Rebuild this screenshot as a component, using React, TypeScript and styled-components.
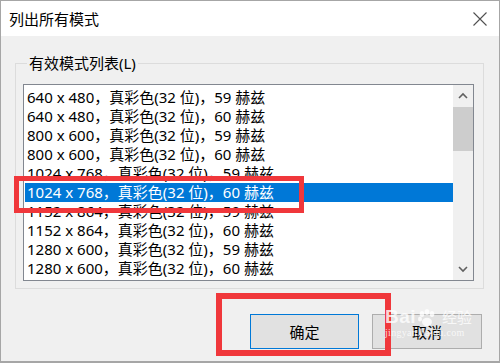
import React from "react";
import styled, { createGlobalStyle } from "styled-components";

const GlobalStyle = createGlobalStyle`
  html, body { margin: 0; padding: 0; background: #ffffff; }
  body { font-family: "Noto Sans", "Noto Sans CJK SC", sans-serif; }
`;

const FONT = `"Noto Sans", "Noto Sans CJK SC", sans-serif`;

const Window = styled.div`
  position: relative;
  width: 500px;
  height: 363px;
  box-sizing: border-box;
  border: 1px solid #a6a6a6;
  border-bottom-width: 2px;
  display: flex;
  flex-direction: column;
  background: #f0f0f0;
  overflow: hidden;
  font-family: ${FONT};
`;

const TitleBar = styled.div`
  height: 35px;
  flex: none;
  background: #ffffff;
  display: flex;
  align-items: center;
  justify-content: space-between;
  padding: 0 12px 0 8px;
`;

const Title = styled.span`
  font-size: 15px;
  color: #000;
  line-height: 20px;
`;

const CloseButton = styled.span`
  display: flex;
  width: 14px;
  height: 14px;
`;

const Body = styled.div`
  flex: 1;
  display: flex;
  flex-direction: column;
  padding: 17px 15px 0 14px;
`;

const GroupBox = styled.fieldset`
  margin: 0;
  padding: 11px 9px 7px 7px;
  border: 1px solid #dcdcdc;
  min-width: 0;
`;

const GroupTitle = styled.legend`
  font-size: 15px;
  line-height: 20px;
  color: #000;
  padding: 0 2px;
  margin-left: 4px;
`;

const ListBox = styled.div`
  height: 197px;
  box-sizing: border-box;
  border: 1px solid #828790;
  background: #ffffff;
  display: flex;
`;

const Items = styled.div`
  flex: 1;
  padding: 3px 0 0 1px;
  overflow: hidden;
`;

const Item = styled.div<{ $selected?: boolean }>`
  height: 19px;
  line-height: 19px;
  padding-left: 2px;
  font-size: 15px;
  white-space: nowrap;
  color: ${(p) => (p.$selected ? "#ffffff" : "#000000")};
  background: ${(p) => (p.$selected ? "#0078d7" : "transparent")};
`;

const ScrollBar = styled.div`
  width: 20px;
  flex: none;
  background: #f0f0f0;
  display: flex;
  flex-direction: column;
`;

const ArrowBox = styled.div`
  height: 21px;
  display: flex;
  align-items: center;
  justify-content: center;
`;

const Track = styled.div`
  flex: 1;
  display: flex;
  flex-direction: column;
  padding-top: 1px;
`;

const Thumb = styled.div`
  height: 44px;
  background: #cdcdcd;
`;

const ButtonRow = styled.div`
  display: flex;
  justify-content: flex-end;
  gap: 13px;
  margin-top: 25px;
  padding-right: 2px;
`;

const Button = styled.button<{ $default?: boolean }>`
  width: ${(p) => (p.$default ? "109px" : "110px")};
  height: 35px;
  box-sizing: border-box;
  border: 1px solid ${(p) => (p.$default ? "#0078d7" : "#adadad")};
  background: #e1e1e1;
  font-family: ${FONT};
  font-size: 15px;
  color: #000;
  padding: 0;
`;

const Annotation = styled.div`
  position: absolute;
  box-sizing: border-box;
  border: 5px solid #f0373b;
  pointer-events: none;
`;

const Watermark = styled.div`
  position: absolute;
  left: 384px;
  top: 306px;
  display: flex;
  flex-direction: column;
  align-items: flex-start;
  color: rgba(255, 255, 255, 0.78);
  pointer-events: none;
`;

const MarkTop = styled.div`
  display: flex;
  align-items: flex-end;
  gap: 1px;
`;

const MarkBai = styled.span`
  font-family: "Liberation Sans", sans-serif;
  font-weight: bold;
  font-size: 19px;
  line-height: 20px;
  letter-spacing: 0.5px;
`;

const MarkJy = styled.span`
  font-family: "Noto Sans CJK SC", sans-serif;
  font-size: 15px;
  line-height: 20px;
  margin-left: 4px;
`;

const MarkUrl = styled.span`
  font-family: "Liberation Serif", serif;
  font-size: 10px;
  line-height: 12px;
  margin-top: 0px;
  letter-spacing: 0.3px;
`;

const rows = [
  "640 x 480，真彩色(32 位)，59 赫兹",
  "640 x 480，真彩色(32 位)，60 赫兹",
  "800 x 600，真彩色(32 位)，59 赫兹",
  "800 x 600，真彩色(32 位)，60 赫兹",
  "1024 x 768，真彩色(32 位)，59 赫兹",
  "1024 x 768，真彩色(32 位)，60 赫兹",
  "1152 x 864，真彩色(32 位)，59 赫兹",
  "1152 x 864，真彩色(32 位)，60 赫兹",
  "1280 x 600，真彩色(32 位)，59 赫兹",
  "1280 x 600，真彩色(32 位)，60 赫兹",
];

const Chevron = ({ up }: { up?: boolean }) => (
  <svg width="10" height="7" viewBox="0 0 10 7">
    <path
      d={up ? "M1 6 L5 2 L9 6" : "M1 1 L5 5 L9 1"}
      fill="none"
      stroke="#606060"
      strokeWidth="1.6"
    />
  </svg>
);

export default function App() {
  return (
    <>
      <GlobalStyle />
      <Window>
        <TitleBar>
          <Title>列出所有模式</Title>
          <CloseButton>
            <svg width="14" height="14" viewBox="0 0 14 14">
              <path d="M0.5 0.5 L13.5 13.5 M13.5 0.5 L0.5 13.5" stroke="#505050" strokeWidth="1.1" />
            </svg>
          </CloseButton>
        </TitleBar>
        <Body>
          <GroupBox>
            <GroupTitle>有效模式列表(L)</GroupTitle>
            <ListBox>
              <Items>
                {rows.map((r, i) => (
                  <Item key={i} $selected={i === 5}>
                    {r}
                  </Item>
                ))}
              </Items>
              <ScrollBar>
                <ArrowBox>
                  <Chevron up />
                </ArrowBox>
                <Track>
                  <Thumb />
                </Track>
                <ArrowBox>
                  <Chevron />
                </ArrowBox>
              </ScrollBar>
            </ListBox>
          </GroupBox>
          <ButtonRow>
            <Button $default>确定</Button>
            <Button>取消</Button>
          </ButtonRow>
        </Body>
        <Annotation style={{ left: 13, top: 175, width: 290, height: 37 }} />
        <Annotation style={{ left: 215, top: 292, width: 175, height: 63, borderWidth: 6 }} />
        <Watermark>
          <MarkTop>
            <MarkBai>Bai</MarkBai>
            <svg width="20" height="18" viewBox="0 0 20 18">
              <g fill="rgba(255,255,255,0.78)">
                <ellipse cx="5" cy="5" rx="2.3" ry="3" />
                <ellipse cx="10" cy="3" rx="2.3" ry="3" />
                <ellipse cx="15" cy="5" rx="2.3" ry="3" />
                <ellipse cx="3" cy="10" rx="2" ry="2.5" />
                <ellipse cx="10" cy="13" rx="5" ry="4.2" />
              </g>
            </svg>
            <MarkJy>经验</MarkJy>
          </MarkTop>
          <MarkUrl>jingyan.baidu.com</MarkUrl>
        </Watermark>
      </Window>
    </>
  );
}
